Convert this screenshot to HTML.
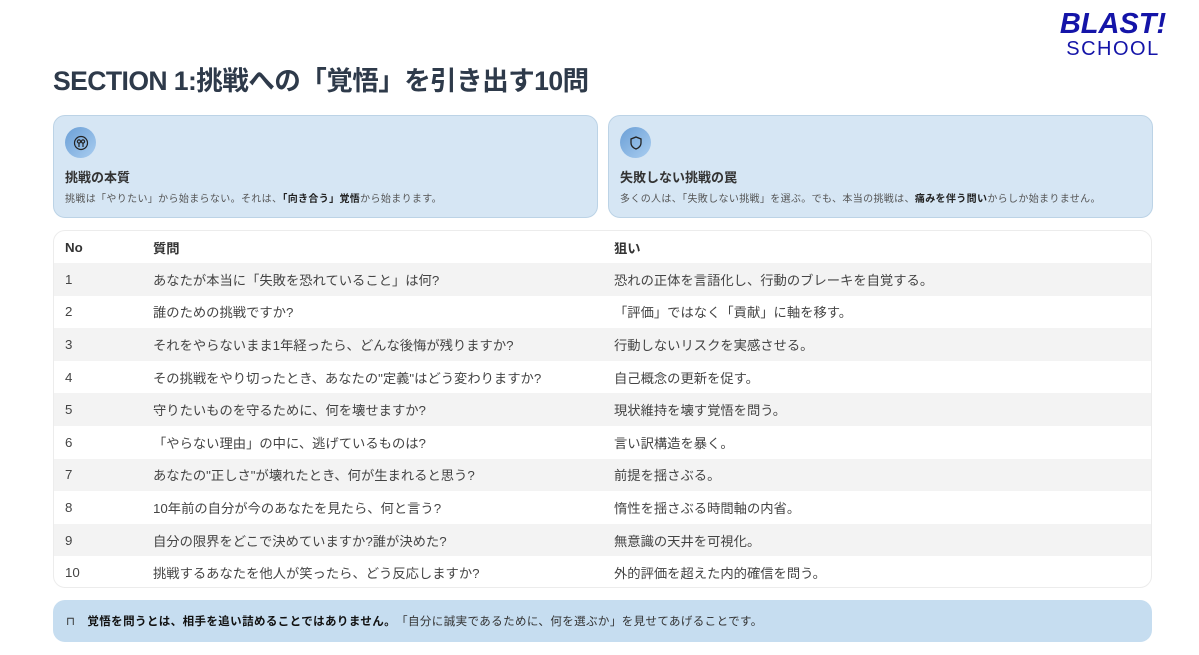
<!DOCTYPE html>
<html><head><meta charset="utf-8"><style>
*{margin:0;padding:0;box-sizing:border-box}
body{width:1199px;height:655px;background:#fff;font-family:"Liberation Sans","Noto Sans CJK JP",sans-serif;color:#333;position:relative;overflow:hidden}
.logo{position:absolute;left:1058px;top:10px;width:110px;text-align:center;color:#1414a8;line-height:1}
.logo .b{font-size:29px;font-weight:900;font-style:italic}
.logo .s{font-size:20px;letter-spacing:1.5px;margin-top:0px}
h1{position:absolute;left:53px;top:59px;font-size:26.6px;font-weight:700;color:#2e3a4a;letter-spacing:-0.6px;white-space:nowrap}
.card{position:absolute;top:115px;height:103px;width:545px;background:#d6e6f4;border:1px solid #bcd3e6;border-radius:12px}
.ic{position:absolute;left:11px;top:11px;width:31px;height:31px;border-radius:50%;background:linear-gradient(135deg,#6b9fd6,#a9cdf0);display:flex;align-items:center;justify-content:center}
.ct{position:absolute;left:11px;top:51px;font-size:13px;font-weight:700;color:#333}
.cd{position:absolute;left:11px;top:74px;font-size:10px;color:#555;white-space:nowrap;letter-spacing:0.35px}
.cd b{color:#222}
.tbl{position:absolute;left:53px;top:230px;width:1099px;height:358px;border:1px solid #ececec;border-radius:12px;overflow:hidden}
.r{height:32.6px;display:flex;align-items:center;font-size:13.3px;color:#444;position:relative}
.r:nth-child(even){background:#f3f3f3}
.r span{position:absolute}
.r .a{left:11px}.r .q{left:99px}.r .g{left:560px}
.h{font-weight:700;color:#333;height:32px}
.ban{position:absolute;left:53px;top:600px;width:1099px;height:42px;background:#c6ddf0;border-radius:12px;font-size:11.5px;display:flex;align-items:center;padding-left:13px;color:#333;white-space:nowrap;letter-spacing:0.4px}
.ban b{color:#111;margin-left:12px}
</style></head><body>
<div class="logo"><div class="b">BLAST!</div><div class="s">SCHOOL</div></div>
<h1>SECTION 1:挑戦への「覚悟」を引き出す10問</h1>
<div class="card" style="left:53px"><div class="ic"><svg width="16" height="16" viewBox="0 0 16 16" fill="none" stroke="#222" stroke-width="1.2"><circle cx="8" cy="8" r="6.5"/><circle cx="6" cy="6.5" r="1.6"/><circle cx="10" cy="6.5" r="1.6"/><path d="M6 8v4M10 8v4"/></svg></div><div class="ct">挑戦の本質</div><div class="cd">挑戦は「やりたい」から始まらない。それは、<b>「向き合う」覚悟</b>から始まります。</div></div>
<div class="card" style="left:608px;width:545px"><div class="ic"><svg width="16" height="16" viewBox="0 0 16 16" fill="none" stroke="#222" stroke-width="1.3"><path d="M8 2l5 2v4c0 3-2.5 5-5 6-2.5-1-5-3-5-6V4z"/></svg></div><div class="ct">失敗しない挑戦の罠</div><div class="cd">多くの人は、「失敗しない挑戦」を選ぶ。でも、本当の挑戦は、<b>痛みを伴う問い</b>からしか始まりません。</div></div>
<div class="tbl">
<div class="r h"><span class="a">No</span><span class="q">質問</span><span class="g">狙い</span></div>
<div class="r"><span class="a">1</span><span class="q">あなたが本当に「失敗を恐れていること」は何?</span><span class="g">恐れの正体を言語化し、行動のブレーキを自覚する。</span></div>
<div class="r"><span class="a">2</span><span class="q">誰のための挑戦ですか?</span><span class="g">「評価」ではなく「貢献」に軸を移す。</span></div>
<div class="r"><span class="a">3</span><span class="q">それをやらないまま1年経ったら、どんな後悔が残りますか?</span><span class="g">行動しないリスクを実感させる。</span></div>
<div class="r"><span class="a">4</span><span class="q">その挑戦をやり切ったとき、あなたの"定義"はどう変わりますか?</span><span class="g">自己概念の更新を促す。</span></div>
<div class="r"><span class="a">5</span><span class="q">守りたいものを守るために、何を壊せますか?</span><span class="g">現状維持を壊す覚悟を問う。</span></div>
<div class="r"><span class="a">6</span><span class="q">「やらない理由」の中に、逃げているものは?</span><span class="g">言い訳構造を暴く。</span></div>
<div class="r"><span class="a">7</span><span class="q">あなたの"正しさ"が壊れたとき、何が生まれると思う?</span><span class="g">前提を揺さぶる。</span></div>
<div class="r"><span class="a">8</span><span class="q">10年前の自分が今のあなたを見たら、何と言う?</span><span class="g">惰性を揺さぶる時間軸の内省。</span></div>
<div class="r"><span class="a">9</span><span class="q">自分の限界をどこで決めていますか?誰が決めた?</span><span class="g">無意識の天井を可視化。</span></div>
<div class="r"><span class="a">10</span><span class="q">挑戦するあなたを他人が笑ったら、どう反応しますか?</span><span class="g">外的評価を超えた内的確信を問う。</span></div>
</div>
<div class="ban">⊓<b>覚悟を問うとは、相手を追い詰めることではありません。</b>「自分に誠実であるために、何を選ぶか」を見せてあげることです。</div>
</body></html>
